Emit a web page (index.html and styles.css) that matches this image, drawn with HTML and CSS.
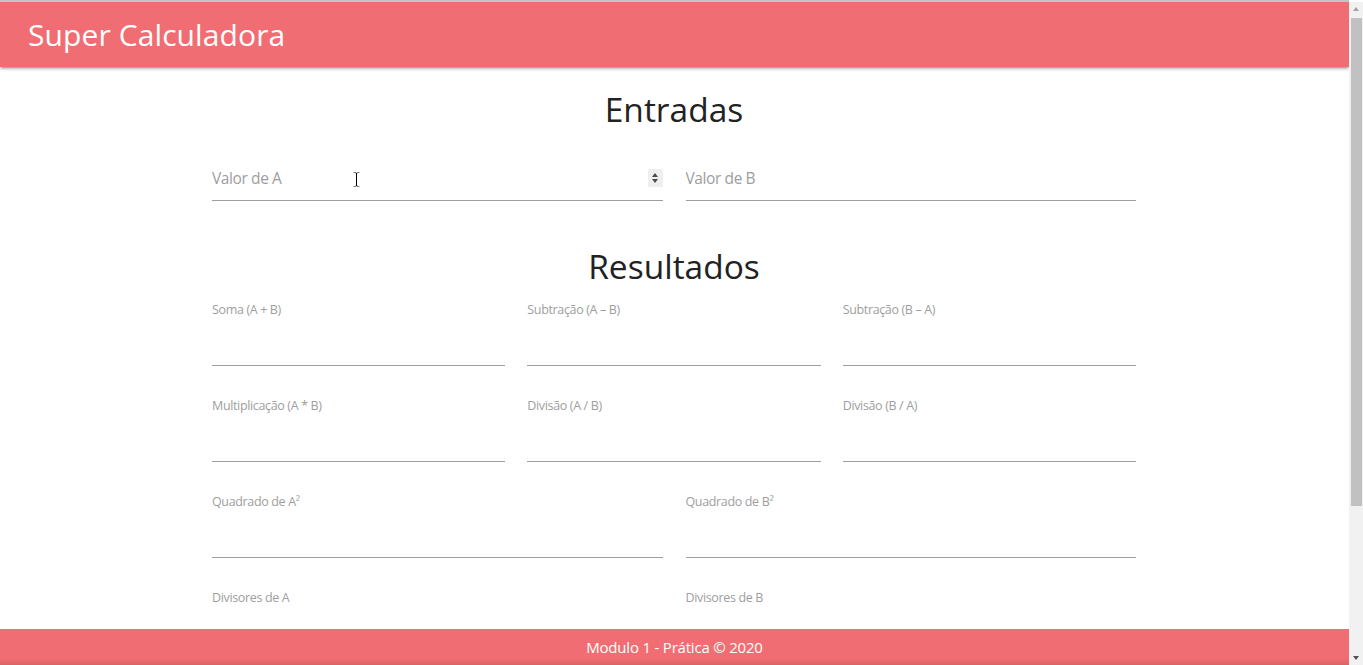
FILE: index.html
```html
<!DOCTYPE html>
<html lang="pt-BR">
<head>
<meta charset="utf-8">
<title>Super Calculadora</title>
<link rel="stylesheet" href="styles.css">
</head>
<body>
<header class="topbar">
  <span class="brand">Super Calculadora</span>
</header>

<main class="container">
  <h2 class="section-title title-in">Entradas</h2>
  <div class="grid grid-2">
    <div class="entry">
      <input class="entry-input" type="text" placeholder="Valor de A">
      <span class="spinner"><span class="tri tri-up"></span><span class="tri tri-down"></span></span>
      <svg class="ibeam" width="9" height="17" viewBox="0 0 9 17"><path d="M1 1h3l.5.5.5-.5h3v1.5H5.5v12H8V16H5l-.5-.5-.5.5H1v-1.5h2.5v-12H1z" fill="#000" stroke="#fff" stroke-width="1"/></svg>
    </div>
    <div class="entry">
      <input class="entry-input" type="text" placeholder="Valor de B">
    </div>
  </div>

  <h2 class="section-title title-out">Resultados</h2>
  <div class="grid grid-3">
    <div class="result"><label class="result-label">Soma (A + B)</label><input class="result-input" type="text" readonly></div>
    <div class="result"><label class="result-label">Subtração (A – B)</label><input class="result-input" type="text" readonly></div>
    <div class="result"><label class="result-label">Subtração (B – A)</label><input class="result-input" type="text" readonly></div>
    <div class="result"><label class="result-label">Multiplicação (A * B)</label><input class="result-input" type="text" readonly></div>
    <div class="result"><label class="result-label">Divisão (A / B)</label><input class="result-input" type="text" readonly></div>
    <div class="result"><label class="result-label">Divisão (B / A)</label><input class="result-input" type="text" readonly></div>
  </div>
  <div class="grid grid-2">
    <div class="result"><label class="result-label">Quadrado de A²</label><input class="result-input" type="text" readonly></div>
    <div class="result"><label class="result-label">Quadrado de B²</label><input class="result-input" type="text" readonly></div>
    <div class="result"><label class="result-label">Divisores de A</label><input class="result-input" type="text" readonly></div>
    <div class="result"><label class="result-label">Divisores de B</label><input class="result-input" type="text" readonly></div>
  </div>
</main>

<footer class="footer">Modulo 1 - Prática © 2020</footer>

<aside class="scrollbar" aria-hidden="true">
  <span class="sb-button"><span class="sb-arrow sb-arrow-up"></span></span>
  <span class="sb-track"><span class="sb-thumb"></span></span>
  <span class="sb-button"><span class="sb-arrow sb-arrow-down"></span></span>
</aside>
</body>
</html>
```

FILE: styles.css
```css
html {
  background: #ffffff;
  overflow: hidden;
}

body {
  margin: 0 14px 0 0;
  border-top: 2px solid #c3c3c3;
  font-family: "Open Sans", "Noto Sans", sans-serif;
  color: rgba(0, 0, 0, 0.87);
}

.topbar {
  height: 65px;
  background: #f06e73;
  display: flex;
  align-items: center;
  padding-left: 28px;
  box-shadow: 0 2px 2px 0 rgba(0, 0, 0, 0.14), 0 3px 1px -2px rgba(0, 0, 0, 0.12), 0 1px 5px 0 rgba(0, 0, 0, 0.2);
  position: relative;
  z-index: 2;
}

.brand {
  color: #ffffff;
  font-size: 30px;
  line-height: 40px;
  letter-spacing: 0.1px;
}

.container {
  width: 924px;
  margin: 0 auto;
  padding: 0 1px 180px 0;
}

.section-title {
  margin: 0;
  text-align: center;
  font-weight: 400;
  font-size: 33.5px;
  line-height: 40px;
  color: #222222;
}

.title-in {
  margin-top: 22px;
  margin-bottom: 29px;
}

.title-out {
  margin-top: 45px;
  margin-bottom: 16px;
}

.grid {
  display: grid;
}

.grid-2 {
  grid-template-columns: 1fr 1fr;
  column-gap: 23px;
}

.grid-3 {
  grid-template-columns: 1fr 1fr 1fr;
  column-gap: 22px;
}

.entry {
  position: relative;
}

.entry-input,
.result-input {
  display: block;
  width: 100%;
  box-sizing: content-box;
  border: 0;
  border-bottom: 1px solid #9e9e9e;
  padding: 0;
  margin: 0;
  outline: none;
  background: transparent;
  font-family: inherit;
  font-size: 16px;
  color: rgba(0, 0, 0, 0.87);
}

.entry-input {
  height: 40px;
  padding-bottom: 2px;
  font-size: 15.5px;
  letter-spacing: -0.4px;
}

.entry-input::placeholder {
  color: #9e9e9e;
}

.spinner {
  position: absolute;
  right: 0;
  top: 11px;
  width: 15px;
  height: 18px;
  background: #efefef;
  display: flex;
  flex-direction: column;
  align-items: center;
  justify-content: center;
  gap: 2px;
}

.tri {
  width: 0;
  height: 0;
  border-left: 3.5px solid transparent;
  border-right: 3.5px solid transparent;
}

.tri-up {
  border-bottom: 4px solid #4a4a4a;
}

.tri-down {
  border-top: 4px solid #4a4a4a;
}

.ibeam {
  position: absolute;
  left: 140px;
  top: 13px;
}

.result {
  margin-bottom: 32px;
}

.result-label {
  display: block;
  font-size: 12.5px;
  line-height: 15px;
  letter-spacing: -0.35px;
  color: #9e9e9e;
}

.result-input {
  height: 48px;
}

.footer {
  position: fixed;
  left: 0;
  right: 14px;
  bottom: 0;
  height: 36px;
  line-height: 36px;
  background: #f06e73;
  color: #ffffff;
  text-align: center;
  font-size: 15px;
  letter-spacing: -0.2px;
  box-shadow: inset 0 -6px 5px -3px rgba(0, 0, 0, 0.1);
}

.scrollbar {
  position: fixed;
  top: 2px;
  right: 0;
  bottom: 0;
  width: 14px;
  background: #f1f1f1;
  display: flex;
  flex-direction: column;
  z-index: 5;
}

.sb-button {
  height: 14px;
  flex: 0 0 14px;
  display: flex;
  justify-content: center;
  align-items: center;
}

.sb-track {
  flex: 1;
  display: flex;
  flex-direction: column;
  padding: 2px 1px 0 2px;
}

.sb-thumb {
  height: 488px;
  background: #c1c1c1;
}

.sb-arrow {
  width: 0;
  height: 0;
  border-left: 3.5px solid transparent;
  border-right: 3.5px solid transparent;
}

.sb-arrow-up {
  border-bottom: 4px solid #a3a3a3;
}

.sb-arrow-down {
  border-top: 4px solid #505050;
}
```
